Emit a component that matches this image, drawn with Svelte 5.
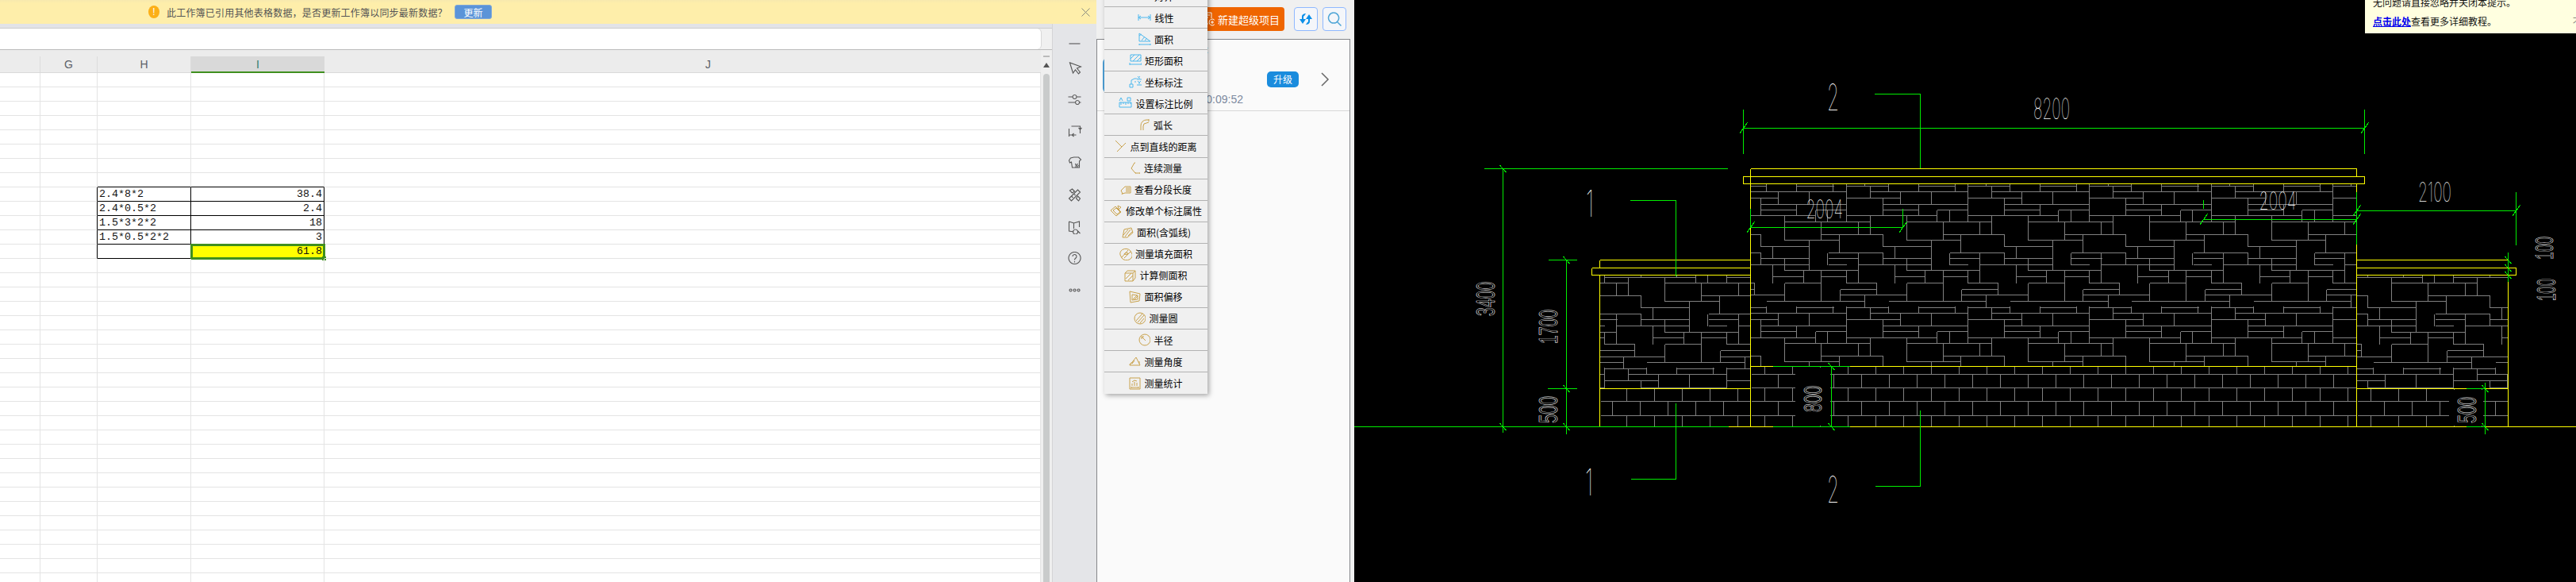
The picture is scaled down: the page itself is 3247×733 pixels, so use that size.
<script lang="ts">
    const BLUE = "#4db8ee";
    const GOLD = "#c9a24c";

    const menuItems = [
        { label: "对齐", color: BLUE, w: 16, d: "M1 12l6-8" },
        { label: "线性", color: BLUE, w: 17, d: "M1 4v8M16 4v8M1 8h15M1 8l3-2M1 8l3 2M16 8l-3-2M16 8l-3 2" },
        { label: "面积", color: BLUE, w: 16, d: "M1 1v10h14zM4 10l4-5M8 10l3-3M1 4l3-2M1 14v2M15 14v2M1 15h14" },
        { label: "矩形面积", color: BLUE, w: 16, d: "M2 1h13v8H2zM2 6l5-5M5 9l8-8M10 9l5-5M1 11v3M16 11v3M1 13h15" },
        { label: "坐标标注", color: BLUE, w: 16, d: "M1 11h4v4H1zM3 11V6l4-2h3M7 8h2M11 1l3 3M14 1l-3 3M11 7l2 2v2M15 7l-2 2M10 5h6M10 12h6" },
        { label: "设置标注比例", color: BLUE, w: 17, d: "M1 7h15v6H1zM3 7v3M6 7v2M9 7v3M12 7v2M15 7v2M1 5l2-4 2 4M8 2v0M8 4v0M11 1h4v4h-4z" },
        { label: "弧长", color: GOLD, w: 14, d: "M2 15V9a7 7 0 0 1 7-7h3M5 15V10a4 4 0 0 1 4-4M9 6l3-1M12 1v3" },
        { label: "点到直线的距离", color: GOLD, w: 15, d: "M1 1l6 6M3 15l11-11M2 2h0M7 7l2 2" },
        { label: "连续测量", color: GOLD, w: 14, d: "M6 1L2 8l5 6h6M6 1h1M2 8h1M7 14h1M12 14h1" },
        { label: "查看分段长度", color: GOLD, w: 14, d: "M1 9l5-5h7v8H6L3 13zM7 6h5M7 8h5M7 10h5M3 12l-1 2" },
        { label: "修改单个标注属性", color: GOLD, w: 16, d: "M1 7l6-5 7 7-6 5zM4 7l4-3 5 5-4 3zM10 1l4 2-3 3z" },
        { label: "面积(含弧线)", color: GOLD, w: 16, d: "M2 14l2-10 9-2 2 6-7 6zM3 11l6-7M5 13l7-9M9 12l5-5" },
        { label: "测量填充面积", color: GOLD, w: 16, d: "M1 9a7 6 0 0 1 14-3 7 6 0 0 1-12 7zM3 12l8-9M6 13l8-8M6 8a3 2 0 0 1 5-1 3 2 0 0 1-5 1z" },
        { label: "计算侧面积", color: GOLD, w: 15, d: "M1 5h10v10H1zM1 5l3-3h10v9l-3 4M11 5l3-3M2 12l7-7M5 14l6-6" },
        { label: "面积偏移", color: GOLD, w: 15, d: "M1 1l13 3-1 9-11 2zM4 5l7 1v5l-7 1zM5 11l5-5M7 11l4-4" },
        { label: "测量圆", color: GOLD, w: 15, d: "M8 1a7 7 0 1 0 0 14A7 7 0 0 0 8 1zM3 11l8-9M5 13l8-9M8 14l5-6" },
        { label: "半径", color: GOLD, w: 15, d: "M8 1a7 7 0 1 0 0 14A7 7 0 0 0 8 1zM4 4l5 5M4 4v3M4 4h3" },
        { label: "测量角度", color: GOLD, w: 15, d: "M1 13h13L9 3zM1 13a3 3 0 0 1 4-3M4 11l3-4M13 8v3" },
        { label: "测量统计", color: GOLD, w: 15, d: "M1 1h13v14H1zM4 8v3M7 6v5M10 7v4M4 6l3-2 3 1M3 13h9M3 12v2M12 12v2" }
    ];

    const toolIcons = [
        { cls: "tool-dash", d: "M1 10h14" },
        { cls: "", d: "M2 2l4 13 3-4 4 5 2-2-4-5 5-2z" },
        { cls: "", d: "M0 5h5M11 5h5M0 12h9M14 12h2M8 2.500a2.500 2.500 0 1 0 .1 0M11.500 9.500a2.500 2.500 0 1 0 .1 0" },
        { cls: "", d: "M1 2v0M1 5v10M4 2h11v9M1 13h9M5 13l2-2M5 13l2 2M15 6l-2-2M15 6l2-2" },
        { cls: "", d: "M3 2l4-1h6l3 3-2 2v8H5l-1-7-2 1-1-3zM9 14l3-5M11 14l2-3M9 9l1 3" },
        { cls: "", d: "M1 13l11-11 3 3L4 16zM4 10l2 2M7 7l2 2M2 3l3-2 3 3-3 2zM12 10l3 3-2 3-3-3z" },
        { cls: "", d: "M1 2l6 2 7-2v7M1 2v12l6 1M7 4v7M9 12a3 3 0 1 0 .1 0M12 14l3 3" },
        { cls: "", d: "M8 .5a7.500 7.500 0 1 0 .1 0M5.500 6a2.500 2.500 0 1 1 4 2c-1 .8-1.500 1-1.500 2.500M8 12v1.500" },
        { cls: "", d: "M3 7a1.500 1.500 0 1 0 .1 0M8 7a1.500 1.500 0 1 0 .1 0M13 7a1.500 1.500 0 1 0 .1 0" }
    ];

    const rows = Array.from({ length: 36 }, (_, i) => i);
    const tableCells: Record<number, [string, string]> = {
        8: ["2.4*8*2", "38.4"],
        9: ["2.4*0.5*2", "2.4"],
        10: ["1.5*3*2*2", "18"],
        11: ["1.5*0.5*2*2", "3"],
        12: ["", "61.8"]
    };

    // stone hatch tile, read off the drawing at 3x (period 460 there)
    const stoneH = [
        [27, 352, 511], [27, 625, 764], [48, 442, 812], [72, 352, 556], [97, 490, 812],
        [118, 490, 625], [118, 695, 812], [140, 352, 695], [163, 352, 442], [163, 580, 812],
        [210, 352, 490], [210, 718, 812], [232, 580, 786], [255, 490, 673], [280, 352, 490],
        [280, 743, 812], [300, 490, 673], [300, 743, 812], [300, 352, 398], [325, 397, 672],
        [325, 743, 812], [347, 580, 812], [347, 352, 396], [370, 535, 650], [370, 718, 812],
        [393, 352, 466], [393, 580, 718], [393, 812, 812], [418, 352, 466], [418, 788, 812],
        [440, 352, 466], [440, 788, 812], [440, 422, 580], [462, 511, 812], [462, 352, 420]
    ];
    const stoneV = [
        [352, 27, 163], [442, 27, 72], [511, 20, 48], [625, 20, 48], [763, 20, 48], [812, 20, 163],
        [556, 48, 97], [673, 48, 97], [490, 72, 140], [625, 97, 140], [695, 118, 163], [742, 118, 163],
        [580, 140, 232], [442, 140, 210], [397, 163, 210], [718, 163, 232], [490, 210, 255],
        [786, 210, 280], [673, 232, 347], [535, 255, 300], [397, 280, 393], [742, 280, 325],
        [490, 280, 325], [580, 300, 347], [535, 325, 393], [650, 347, 393], [718, 347, 462],
        [812, 347, 393], [580, 393, 462], [466, 393, 440], [788, 418, 462], [422, 440, 484]
    ];

    const px = (v: number) => Math.floor(v) + 0.5;

    function stonePath(originX: number, originY: number) {
        const period = 460 / 3;
        let d = "";
        for (let i = -4; i < 8; i++) {
            for (let j = -2; j < 4; j++) {
                const ox = originX + i * period;
                const oy = originY + j * period;
                for (const [y, a, b] of stoneH) {
                    d += `M${px(ox + (a - 352) / 3)} ${px(oy + (y - 48) / 3)}H${px(ox + (b - 352) / 3)}`;
                }
                for (const [x, a, b] of stoneV) {
                    d += `M${px(ox + (x - 352) / 3)} ${px(oy + (a - 48) / 3)}V${px(oy + (b - 48) / 3)}`;
                }
            }
        }
        return d;
    }

    function brickPath(x0: number, x1: number, courses: number[][]) {
        let d = "";
        for (const [top, bottom, start] of courses) {
            d += `M${px(x0)} ${px(bottom)}H${px(x1)}`;
            let x = start;
            while (x > x0) x -= 35;
            for (x += 35; x < x1; x += 35) d += `M${px(x)} ${px(top)}V${px(bottom)}`;
        }
        return d;
    }

    const mainStone = stonePath(2327.33, 241);
    const leftStone = stonePath(2327.33 - 304.6, 241 + 77.4);
    const rightStone = stonePath(2327.33 + 611.5, 241 + 77.4);

    const mainBrick = brickPath(2207, 2970, [[461, 471, 2224.7], [471, 488, 2241.7], [488, 505, 2224.7], [505, 523, 2241.7], [523, 537, 2224.7]]);
    const leftBrick = brickPath(2017, 2206, [[489, 505, 2050.3], [505, 523, 2032.3], [523, 537, 2050.3]]);
    const rightBrick = brickPath(2971, 3161, [[489, 505, 2988.4], [505, 523, 3005.7], [523, 537, 2988.4]]);

    const yellow = [
        "M2206.5 212.500H2970.500V222.500", "M2197.500 222.500H2980.500V231.500H2197.500Z",
        "M2206.500 212.500V537", "M2970.500 231V537",
        "M2016.500 327.500H2206.500M2006.500 337.500H2206.500M2006.500 337.500V346.500H2206.500M2016.500 327.500V337.500",
        "M2970.500 327.500H3161.500M2970.500 337.500H3171.500V346.500H2970.500",
        "M2016.500 346V537.500M3161.500 346V537.500",
        "M2207 461.500H2970M2016 489.500H2206M2971 489.500H3161",
        "M2179 537.500H3247"
    ];

    const green = [
        "M1707 537.500H2179",
        "M2363 118.500H2420.500V212", "M2197.500 138V194M2980.500 138V194M2197.500 161.500H2980.500",
        "M2055 252.500H2112.500V348", "M1871 212.500H2178M1894.500 212.500V545",
        "M1952 327.500H1988M1951 489.500H1988M1974.500 327.500V547",
        "M2112.500 508V603.500H2056", "M2420.500 517V612.500H2364",
        "M2235 461.500H2332M2235 537.500H2332M2308.500 461.500V537.500",
        "M2206.500 263V287M2206.500 286.500H2398.500V263",
        "M2777.500 252V263M2777.500 276.500H2970.500",
        "M2970.500 242V308M3171.500 242V308.500M2970.500 265.500H3171.500",
        "M3161.500 318V355", "M3109 489.500H3132.500M3109 537.500H3132.500M3132.500 482V547"
    ];

    const ticksUp = [[2197.5, 161.5], [2980.5, 161.5], [2206.5, 286.5], [2398.5, 286.5], [2777.5, 276.5], [2970.5, 276.5], [2970.5, 265.5], [3171.5, 265.5]];
    const ticksDown = [[1894.5, 212.5], [1894.5, 537.5], [1974.5, 327.5], [1974.5, 489.5], [1974.5, 537.5], [2308.5, 461.5], [2308.5, 537.5], [3161.5, 327.5], [3161.5, 337.5], [3161.5, 346.5], [3132.5, 489.5], [3132.5, 537.5]];

    // x0,y0,x1,y1 is the box the digits fill
    const labels = [
        { t: "2", box: [2303, 106, 2318, 139] },
        { t: "8200", box: [2563, 124, 2609, 150] },
        { t: "1", box: [1999, 240, 2009, 273] },
        { t: "2004", box: [2276.5, 252, 2323, 275] },
        { t: "2004", box: [2847.5, 242, 2894.5, 264] },
        { t: "2100", box: [3048, 230, 3090, 254] },
        { t: "1", box: [1998, 591, 2008, 624] },
        { t: "2", box: [2303, 600, 2318, 633] },
        { t: "3400", box: [1860, 355, 1884, 398], up: true },
        { t: "1700", box: [1939, 390, 1963, 433], up: true },
        { t: "500", box: [1939, 499, 1963, 533], up: true },
        { t: "800", box: [2273, 486, 2296, 519], up: true },
        { t: "100", box: [3195, 298, 3218, 327], up: true },
        { t: "100", box: [3197, 351, 3221, 379], up: true },
        { t: "500", box: [3097, 500, 3121, 533], up: true }
    ];
</script>

<div class="screen">
    <section class="office">
        <div class="notice">
            <span class="notice-mark">!</span>
            <span class="notice-text">此工作簿已引用其他表格数据，是否更新工作簿以同步最新数据？</span>
            <button class="notice-button" type="button">更新</button>
            <svg class="notice-close" width="11" height="11" viewBox="0 0 11 11" aria-hidden="true">
                <path d="M.5.5l10 10M10.500.5l-10 10" stroke="#8a8a80" fill="none" />
            </svg>
        </div>
        <div class="work">
            <div class="sheet">
                <div class="formula-strip"></div>
                <div class="formula-row"><div class="formula-box"></div></div>
                <div class="sheet-main">
                    <div class="grid">
                        <div class="col-head">
                            <span class="head-cell col-f"></span>
                            <span class="head-cell col-g">G</span>
                            <span class="head-cell col-h">H</span>
                            <span class="head-cell col-i head-active">I</span>
                            <span class="head-cell col-j head-j">J</span>
                        </div>
                        {#each rows as row}
                            {@const data = tableCells[row]}
                            <div class="row">
                                <span class="cell col-f"></span>
                                <span class="cell col-g" class:edge-right={data}></span>
                                <span class="cell col-h" class:boxed={data} class:edge-bottom={row === 7}>{data ? data[0] : ""}</span>
                                <span class="cell col-i num" class:boxed={data} class:edge-bottom={row === 7} class:sum={row === 12}>
                                    {data ? data[1] : ""}
                                    {#if row === 12}<i class="selection"></i>{/if}
                                </span>
                                <span class="cell col-j"></span>
                            </div>
                        {/each}
                    </div>
                    <div class="scrollbar">
                        <span class="split"></span>
                        <span class="arrow"></span>
                        <span class="thumb"></span>
                    </div>
                </div>
            </div>
            <aside class="tools">
                {#each toolIcons as icon}
                    <svg class="tool {icon.cls}" width="18" height="18" viewBox="0 0 17 18" aria-hidden="true">
                        <path d={icon.d} />
                    </svg>
                {/each}
            </aside>
        </div>
    </section>

    <section class="project">
        <header class="project-top">
            <button class="new-project" type="button">
                <svg width="14" height="18" viewBox="0 0 14 18" aria-hidden="true">
                    <path d="M1 1h9v7M1 1v14h5M3 4h5M3 7h3M11 9a4 4 0 1 0 .1 0M11 11v4M9 13h4" fill="none" stroke="#fff" />
                </svg>
                新建超级项目
            </button>
            <button class="square" type="button" aria-label="同步">
                <svg width="18" height="18" viewBox="0 0 18 18" aria-hidden="true">
                    <path d="M13 3l4 6h-3v3c0 3-3 4-5 4l2-3c1 0 1-1 1-2V9H9zM5 15L1 9h3V6c0-3 3-4 5-4L7 5C6 5 6 6 6 7v2h3z" fill="#0a8fe8" />
                </svg>
            </button>
            <button class="square" type="button" aria-label="搜索">
                <svg width="18" height="18" viewBox="0 0 18 18" aria-hidden="true">
                    <path d="M8 1a6.500 6.500 0 1 0 .1 0M12.500 12.500l5 5" fill="none" stroke="#4ea5d6" stroke-width="1.500" />
                </svg>
            </button>
        </header>
        <div class="project-body">
            <div class="project-card">
                <span class="avatar"></span>
                <div class="card-title">项目:</div>
                <div class="card-line">
                    <span class="upgrade">升级</span>
                    <svg width="11" height="18" viewBox="0 0 11 18" aria-hidden="true">
                        <path d="M1 1l8 8-8 8" fill="none" stroke="#666" stroke-width="1.500" />
                    </svg>
                </div>
                <div class="card-time">2023-11-09 10:09:52</div>
            </div>
        </div>

        <nav class="measure-menu" aria-label="测量">
            {#each menuItems as item}
                <div class="measure-item">
                    <svg width={item.w} height="16" viewBox="0 0 {item.w} 16" aria-hidden="true">
                        <path d={item.d} fill="none" stroke={item.color} />
                    </svg>
                    <span>{item.label}</span>
                </div>
            {/each}
        </nav>
    </section>

    <section class="cad">
        <svg class="drawing" viewBox="1707 0 1540 733" width="1540" height="733" aria-label="立面图">
            <defs>
                <clipPath id="main-clip"><rect x="2207" y="232" width="763" height="229" /></clipPath>
                <clipPath id="left-clip"><rect x="2017" y="347" width="189" height="142" /></clipPath>
                <clipPath id="right-clip"><rect x="2971" y="347" width="190" height="142" /></clipPath>
            </defs>
            <g class="hatch">
                <path d={mainStone} clip-path="url(#main-clip)" />
                <path d={leftStone} clip-path="url(#left-clip)" />
                <path d={rightStone} clip-path="url(#right-clip)" />
                <path d={mainBrick} />
                <path d={leftBrick} />
                <path d={rightBrick} />
            </g>
            <rect x="2263" y="463" width="44" height="73" fill="#000" />
            <rect x="3087" y="491" width="43" height="45" fill="#000" />
            <g class="yellow-lines">
                {#each yellow as d}<path {d} />{/each}
            </g>
            <g class="green-lines">
                {#each green as d}<path {d} />{/each}
                {#each ticksUp as [x, y]}<path d="M{x - 5} {y + 7}L{x + 5} {y - 7}" />{/each}
                {#each ticksDown as [x, y]}<path d="M{x - 4} {y - 4.500}L{x + 4} {y + 4.500}" />{/each}
            </g>
            {#each labels as label}
                {@const [x0, y0, x1, y1] = label.box}
                {#if label.up}
                    <text
                        class="dim"
                        transform="translate({x1} {y1}) rotate(-90)"
                        font-size={(x1 - x0) / 0.72}
                        textLength={y1 - y0}
                        lengthAdjust="spacingAndGlyphs">{label.t}</text>
                {:else}
                    <text
                        class="dim thin"
                        x={x0}
                        y={y1}
                        font-size={(y1 - y0) / 0.72}
                        textLength={x1 - x0}
                        lengthAdjust="spacingAndGlyphs">{label.t}</text>
                {/if}
            {/each}
        </svg>
        <div class="hint">
            <p class="hint-cut">无问题请直接忽略并关闭本提示。</p>
            <p class="hint-line">
                <a href="#tutorial">点击此处</a>查看更多详细教程。
                <span class="hint-more">不再提示</span>
            </p>
        </div>
    </section>
</div>

<style>
    :global(body) {
        margin: 0;
        background: #000;
    }

    .screen {
        display: flex;
        width: 3247px;
        height: 733px;
        overflow: hidden;
        font-family: "Liberation Sans", "Noto Sans CJK SC", sans-serif;
        font-size: 12px;
    }

    .office {
        display: flex;
        flex-direction: column;
        flex: 0 0 1382px;
        min-width: 0;
    }

    .notice {
        position: relative;
        display: flex;
        align-items: center;
        flex: 0 0 30px;
        padding-left: 187px;
        box-sizing: border-box;
        background: linear-gradient(#f7e9ae 0, #feeeaa 4px);
        color: #555;
    }

    .notice-mark {
        width: 14px;
        height: 16px;
        margin-right: 9px;
        border-radius: 50%;
        background: #fcaf17;
        color: #fff;
        font-size: 12px;
        line-height: 16px;
        text-align: center;
    }

    .notice-text {
        width: 363px;
        font-size: 12px;
        letter-spacing: 0.2px;
    }

    .notice-button {
        width: 47px;
        height: 18px;
        margin-left: 0;
        padding: 0;
        border: 1px solid #80a8d8;
        border-radius: 3px;
        background: #5b94d8;
        color: #fff;
        font: 12px "Noto Sans CJK SC", sans-serif;
    }

    .notice-close {
        position: absolute;
        left: 1363px;
        top: 10px;
    }

    .work {
        display: flex;
        flex: 1;
        min-height: 0;
    }

    .sheet {
        display: flex;
        flex-direction: column;
        flex: 0 0 1326px;
        min-width: 0;
        background: #f0f0f0;
    }

    .formula-strip {
        flex: 0 0 6px;
        background: #e2e3e7;
        border-bottom: 1px solid #ccc;
        box-sizing: border-box;
    }

    .formula-row {
        flex: 0 0 27px;
        box-sizing: border-box;
        border-bottom: 1px solid #bbb;
        background: #f0f0f0;
        padding-right: 14px;
    }

    .formula-box {
        height: 100%;
        background: #fff;
        border-radius: 0 5px 5px 0;
        box-shadow: 1px 0 0 #d8d8d8;
    }

    .sheet-main {
        display: flex;
        flex: 1;
        min-height: 0;
    }

    .grid {
        flex: 0 0 1312px;
        overflow: hidden;
        background: #fff;
        color: #111;
    }

    .col-head {
        display: flex;
        align-items: flex-end;
        height: 29px;
        box-sizing: border-box;
        border-bottom: 1px solid #d9d9d9;
        background: #ececec;
    }

    .head-cell {
        display: block;
        box-sizing: border-box;
        height: 20px;
        border-right: 1px solid #dcdcdc;
        color: #5c6168;
        font-size: 14px;
        line-height: 20px;
        text-align: center;
    }

    .head-active {
        height: 21px;
        margin-bottom: -1px;
        border-right: 0;
        border-bottom: 2px solid #3f8f1f;
        background: #d9d9d9;
        color: #2f7f6f;
    }

    .col-f {
        flex: 0 0 51px;
    }

    .col-g {
        flex: 0 0 72px;
    }

    .col-h {
        flex: 0 0 118px;
    }

    .col-i {
        flex: 0 0 168px;
    }

    .col-j {
        flex: 1 0 0;
        border-right: 0;
        color: #5c6168;
    }

    .head-j {
        flex: 0 0 967px;
    }

    .row {
        display: flex;
        height: 18px;
    }

    .cell {
        position: relative;
        display: block;
        box-sizing: border-box;
        height: 18px;
        padding: 0 2px;
        border-right: 1px solid #e4e4e4;
        border-bottom: 1px solid #e4e4e4;
        font-family: "Liberation Mono", monospace;
        font-size: 13.330px;
        line-height: 18px;
        white-space: nowrap;
    }

    .num {
        text-align: right;
    }

    .edge-right {
        border-right-color: #000;
    }

    .edge-bottom {
        border-bottom-color: #000;
    }

    .boxed {
        border-right-color: #000;
        border-bottom-color: #000;
    }

    .sum {
        background: #ff0;
    }

    .selection {
        position: absolute;
        left: -1px;
        top: -1px;
        width: 170px;
        height: 20px;
        box-sizing: border-box;
        border: 3px solid #3f8f1f;
    }

    .selection::after {
        content: "";
        position: absolute;
        right: -4px;
        bottom: -4px;
        width: 5px;
        height: 5px;
        background: #3f8f1f;
    }

    .scrollbar {
        display: flex;
        flex-direction: column;
        align-items: center;
        flex: 1;
        padding-top: 7px;
        box-sizing: border-box;
        background: #efefef;
    }

    .split {
        width: 8px;
        height: 2px;
        background: #bbb;
    }

    .arrow {
        margin-top: 7px;
        border: 4px solid transparent;
        border-top: 0;
        border-bottom: 6px solid #555;
    }

    .thumb {
        flex: 1;
        width: 8px;
        margin-top: 8px;
        border-radius: 4px 4px 0 0;
        background: #c9cbcb;
    }

    .tools {
        display: flex;
        flex-direction: column;
        align-items: center;
        flex: 1;
        padding-top: 15px;
        border-left: 1px solid #d4d4d6;
        background: #e4e5e8;
    }

    .tool {
        flex: none;
        margin-bottom: 22px;
    }

    .tool path {
        fill: none;
        stroke: #555;
        stroke-width: 1.100;
    }

    .tool-dash {
        margin-bottom: 14px;
    }

    .project {
        position: relative;
        display: flex;
        flex-direction: column;
        flex: 0 0 325px;
        background: #f0f0f0;
    }

    .project-top {
        display: flex;
        align-items: center;
        justify-content: flex-end;
        flex: 0 0 49px;
        gap: 6px;
        padding: 0 10px 1px 0;
        box-sizing: border-box;
    }

    .new-project {
        display: flex;
        align-items: center;
        justify-content: flex-end;
        gap: 4px;
        width: 109px;
        height: 30px;
        margin-right: 6px;
        padding: 0 6px 0 0;
        border: 0;
        border-radius: 4px;
        background: #ef6500;
        color: #fff;
        font: 13px "Noto Sans CJK SC", sans-serif;
    }

    .square {
        display: flex;
        align-items: center;
        justify-content: center;
        width: 30px;
        height: 30px;
        padding: 0;
        border: 1px solid #8fb8ff;
        border-radius: 4px;
        background: #f4f6fa;
    }

    .project-body {
        flex: 1;
        margin-right: 5px;
        border: 1px solid #85868a;
        border-bottom: 0;
        background: #fafafa;
    }

    .project-card {
        position: relative;
        height: 90px;
        box-sizing: border-box;
        padding-top: 5px;
        border-bottom: 1px solid #d8d8d8;
    }

    .avatar {
        position: absolute;
        left: 7px;
        top: 23px;
        width: 44px;
        height: 44px;
        border-radius: 6px;
        background: #4da0d8;
    }

    .card-title {
        padding-right: 178px;
        color: #1f3f6f;
        font-size: 12px;
        line-height: 16px;
        text-align: right;
    }

    .card-line {
        display: flex;
        align-items: center;
        justify-content: flex-end;
        gap: 28px;
        height: 22px;
        margin-top: 18px;
        padding-right: 25px;
    }

    .upgrade {
        width: 40px;
        height: 20px;
        border-radius: 5px;
        background: #1a8cdd;
        color: #fff;
        font-family: "Noto Sans CJK SC", sans-serif;
        font-size: 12px;
        line-height: 20px;
        text-align: center;
    }

    .card-time {
        margin-top: 4px;
        padding-right: 134px;
        color: #7d8aa0;
        font-size: 14px;
        line-height: 20px;
        text-align: right;
    }

    .measure-menu {
        position: absolute;
        left: 10px;
        top: -18px;
        width: 130px;
        background: #f0f0f0;
        box-shadow: 2px 2px 6px rgba(0, 0, 0, 0.35);
        color: #000;
        font-family: "Noto Sans CJK SC", sans-serif;
    }

    .measure-item {
        display: flex;
        align-items: center;
        justify-content: center;
        gap: 4px;
        height: 27.070px;
        box-sizing: border-box;
        border-bottom: 1px solid #b2b2b2;
        font-size: 12px;
    }

    .measure-item:last-child {
        border-bottom: 0;
    }

    .cad {
        position: relative;
        flex: 1;
        min-width: 0;
        background: #000;
    }

    .drawing {
        display: block;
    }

    .hatch path {
        fill: none;
        stroke: #808080;
        shape-rendering: crispEdges;
    }

    .yellow-lines path {
        fill: none;
        stroke: #ff0;
        shape-rendering: crispEdges;
    }

    .green-lines path {
        fill: none;
        stroke: #0e0;
        shape-rendering: crispEdges;
    }

    .dim {
        fill: none;
        stroke: #fff;
        stroke-width: 0.600;
        font-family: "Liberation Sans", sans-serif;
    }

    .thin {
        fill: #fff;
        stroke: none;
        font-family: "Inter", "Liberation Sans", sans-serif;
        font-weight: 100;
    }

    .hint {
        position: absolute;
        right: 0;
        top: 0;
        width: 266px;
        height: 42px;
        overflow: hidden;
        background: #ffffe0;
        color: #111;
        font-family: "Noto Sans CJK SC", sans-serif;
        font-size: 12px;
    }

    .hint p {
        margin: 0;
        padding-left: 10px;
        line-height: 18px;
        white-space: nowrap;
    }

    .hint-cut {
        margin-top: -6px !important;
    }

    .hint-line {
        margin-top: 6px !important;
    }

    .hint-line a {
        color: #00e;
        font-weight: 700;
    }

    .hint-more {
        margin-left: 93px;
        color: #888;
    }
</style>
